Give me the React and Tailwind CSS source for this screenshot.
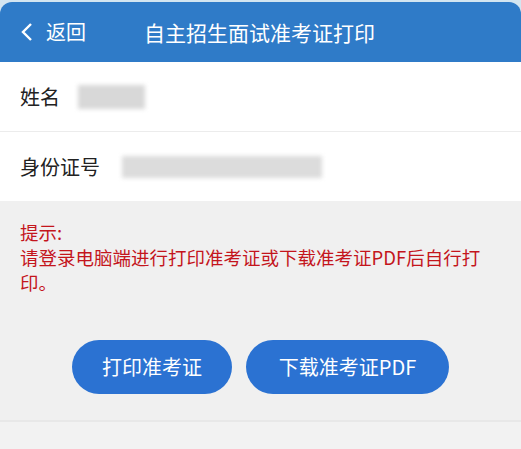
export default function App() {
  const font = { fontFamily: '"Noto Sans CJK SC", "Noto Sans", sans-serif' };

  return (
    <div
      className="w-[521px] h-[449px] bg-[#f0f0f0] overflow-hidden flex flex-col"
      style={font}
    >
      {/* top bar */}
      <div className="bg-[#d3e5f1] pt-[2px]">
        <div className="h-[60px] bg-[#2f7bc8] rounded-t-[12px] flex items-center px-5 text-white">
          <svg width="14" height="22" viewBox="0 0 14 22" className="mr-3">
            <path d="M11 3 L3 11 L11 19" fill="none" stroke="white" strokeWidth="2.4" />
          </svg>
          <span className="text-[20px] leading-none">返回</span>
          <span className="ml-[58px] text-[21px] leading-none">自主招生面试准考证打印</span>
        </div>
      </div>

      {/* info rows */}
      <div className="bg-white">
        <div className="h-[70px] flex items-center px-5 border-b border-[#ececec]">
          <span className="text-[20px] text-[#222]">姓名</span>
          <div className="ml-[18px] w-[67px] h-[24px] bg-[#d8d8d8] blur-[2px]" />
        </div>
        <div className="h-[69px] flex items-center px-5">
          <span className="text-[20px] text-[#222]">身份证号</span>
          <div className="ml-[22px] w-[200px] h-[22px] bg-[#dcdcdc] blur-[2px]" />
        </div>
      </div>

      {/* tip */}
      <div className="px-5 pt-[19px] text-[18.5px] leading-[25px] text-[#c4151c]">
        <p>提示:</p>
        <p>请登录电脑端进行打印准考证或下载准考证PDF后自行打印。</p>
      </div>

      {/* buttons */}
      <div className="flex justify-center gap-[14px] mt-[45px]">
        <button className="w-[160px] h-[54px] rounded-full bg-[#2b72d2] text-white text-[20px]">
          打印准考证
        </button>
        <button className="w-[203px] h-[54px] rounded-full bg-[#2b72d2] text-white text-[20px]">
          下载准考证PDF
        </button>
      </div>

      <div className="mt-[26px] border-t-2 border-[#e8e8e8] flex-1 bg-[#f2f2f2]" />
    </div>
  );
}
